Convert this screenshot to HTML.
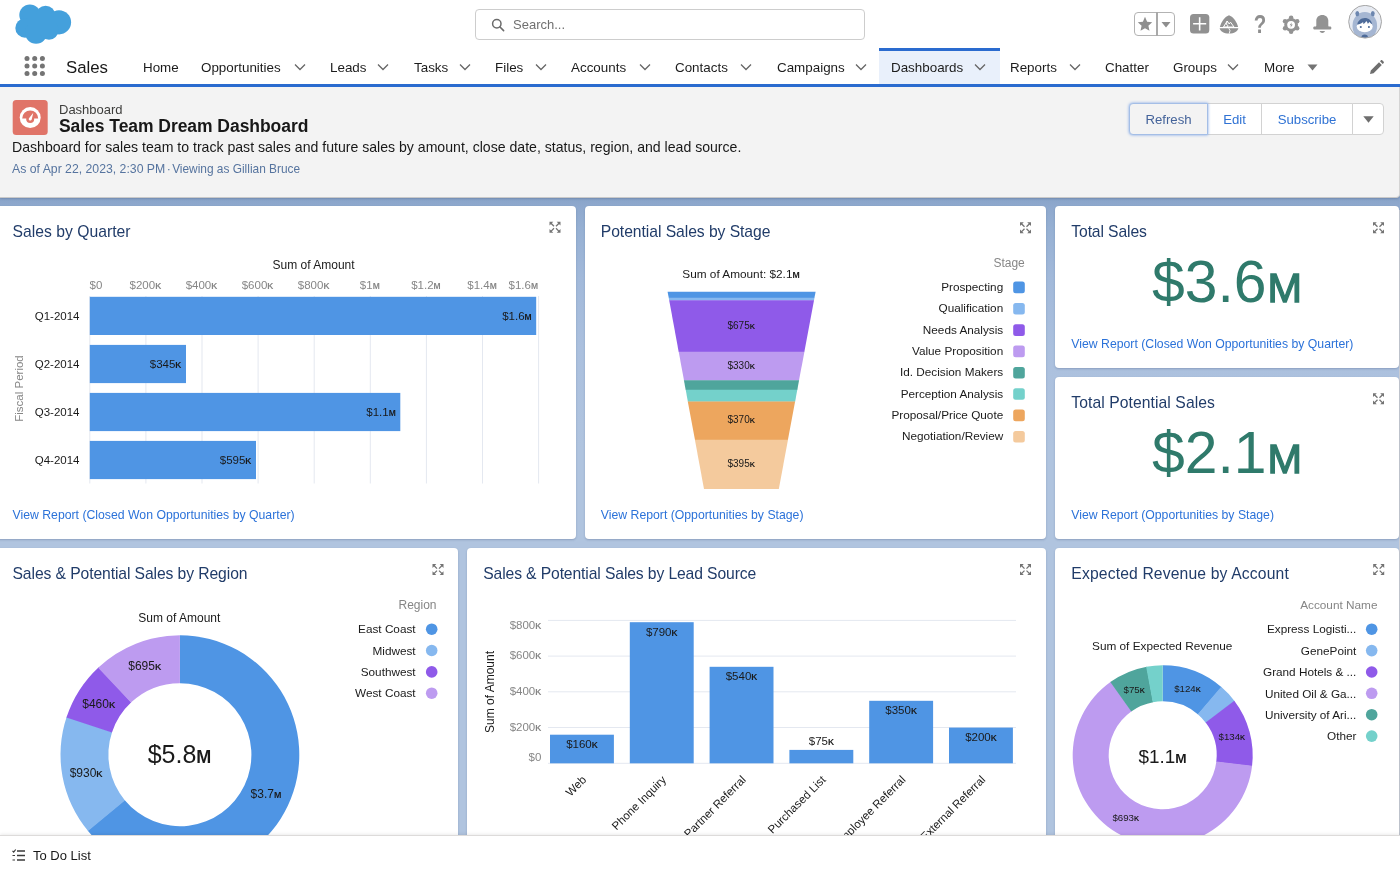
<!DOCTYPE html>
<html lang="en">
<head>
<meta charset="utf-8">
<title>Sales Team Dream Dashboard</title>
<style>
*{box-sizing:border-box;margin:0;padding:0}
html,body{width:1400px;height:875px;overflow:hidden;background:#fff}
body{font-family:"Liberation Sans",sans-serif;color:#181818;position:relative}
.t{position:absolute;white-space:nowrap;line-height:1;will-change:transform}
.abs{position:absolute}
#hdr{position:absolute;left:0;top:0;width:1400px;height:85px;background:#fff}
#navline{position:absolute;left:0;top:84.400px;width:1400px;height:2.800px;background:#2a6bcf}
#search{position:absolute;left:475px;top:9px;width:390px;height:31px;border:1px solid #cdcdcd;border-radius:4px;background:#fff}
.nav{font-size:13.400px;color:#1c1c1c;top:60.600px}
#phdr{position:absolute;left:0;top:87px;width:1400px;height:111px;background:#f3f3f3;border-bottom:1px solid #c9c9c9;border-right:1px solid #d4d4d4;border-radius:0 0 4px 0;box-shadow:0 1px 2px rgba(40,60,100,.25)}
#bg{position:absolute;left:0;top:190px;width:1400px;height:685px;background:linear-gradient(#89a4c9 0,#89a4c9 8px,#8fa9ce 17px,#96b0d3 38px,#a2b9da 88px,#abc0de 158px,#b0c4df 258px,#b0c4df 100%)}
.card{position:absolute;background:#fff;border-radius:4px;box-shadow:0 1px 2px rgba(60,80,120,.3)}
.ct{font-size:16px;color:#16325c;top:24px;left:12px;font-family:"Liberation Sans",sans-serif}
.lnk{font-size:12px;color:#2a6fd6}
.ax{font-size:11px;color:#8a8a8a}
.lb{font-size:11px;color:#181818}
.lg{font-size:12px;color:#181818;text-align:right}
#foot{position:absolute;left:0;top:835px;width:1400px;height:40px;background:#fff;border-top:1px solid #dddbda;box-shadow:0 -1px 3px rgba(0,0,0,.08)}
.btn{position:absolute;top:103px;height:32px;border:1px solid #d2d2d2;background:#fff;color:#2f72d4;font-size:13.200px;text-align:center;line-height:31.500px;will-change:transform}
</style>
</head>
<body>
<div id="bg"></div>
<div id="phdr"></div>
<div id="hdr"></div>

<!-- HEADER -->
<svg class="abs" style="left:14px;top:4px" width="60" height="42" viewBox="0 0 60 42">
 <g fill="#44a0dc">
  <circle cx="15.900" cy="11.100" r="10.600"/><circle cx="31.600" cy="11.400" r="9.700"/><circle cx="45" cy="18.300" r="12.100"/>
  <circle cx="11" cy="24" r="9.700"/><circle cx="22.100" cy="28.600" r="11.100"/><circle cx="35" cy="26.300" r="9.500"/>
  <rect x="14" y="10" width="28" height="20"/>
 </g>
</svg>
<div id="search"></div>
<svg class="abs" style="left:491px;top:18px" width="14" height="14" viewBox="0 0 14 14"><circle cx="5.800" cy="5.800" r="4.200" fill="none" stroke="#6b6b6b" stroke-width="1.500"/><path d="M9 9l3.600 3.600" stroke="#6b6b6b" stroke-width="1.600" stroke-linecap="round"/></svg>
<div class="t" style="left:513px;top:18px;font-size:13px;color:#707070">Search...</div>

<!-- right icons -->
<div class="abs" style="left:1133.500px;top:12.300px;width:41px;height:23.600px;border:1.600px solid #b3b3b3;border-radius:4px"></div>
<div class="abs" style="left:1156.200px;top:12.300px;width:1.600px;height:23.600px;background:#a9a9a9"></div>
<svg class="abs" style="left:1136px;top:15px" width="18" height="18" viewBox="0 0 18 18"><path d="M9 1.800l2.100 4.900 5.100.5-3.800 3.500 1.100 5.100L9 13.200l-4.500 2.600 1.100-5.100-3.800-3.500 5.100-.5z" fill="#8e8e8e"/></svg>
<svg class="abs" style="left:1160.500px;top:22px" width="10" height="6" viewBox="0 0 10 6"><path d="M0.500 0h9L5 5.500z" fill="#8e8e8e"/></svg>
<svg class="abs" style="left:1190px;top:14.300px" width="20" height="20" viewBox="0 0 20 20"><rect x="0" y="0" width="19.300" height="19.600" rx="3.500" fill="#919191"/><path d="M9.650 3.200v13.200M3.100 9.800h13.100" stroke="#fff" stroke-width="1.600"/></svg>
<svg class="abs" style="left:1219px;top:15px" width="20" height="19" viewBox="0 0 20 19"><path d="M10 0.300c3.800 1.200 7.800 6.300 9.100 11.700H.9C2.200 6.600 6.200 1.500 10 .3z" fill="#929292"/><path d="M.6 13.300h18.800c-.5 2.900-4.300 5.300-9.400 5.300S1.100 16.200.6 13.300z" fill="#929292"/><path d="M4.500 12l3.700-6 2 3 1.300-1.800 3.500 4.800z" fill="none" stroke="#fff" stroke-width="1" stroke-linejoin="round"/><path d="M8.200 6l-.8 3.500 1.600 1-1 1.500M9.800 13.300l1.200 2.300-.8 3" fill="none" stroke="#fff" stroke-width=".9"/></svg>
<svg class="abs" style="left:1250px;top:10px;will-change:transform" width="20" height="28" viewBox="0 0 20 28"><text x="3.700" y="23" font-family="Liberation Sans, sans-serif" font-size="25" font-weight="700" fill="#8f8f8f" textLength="12.500" lengthAdjust="spacingAndGlyphs">?</text></svg>
<svg class="abs" style="left:1281px;top:14px" width="21" height="21" viewBox="0 0 21 21"><g fill="#939393"><circle cx="10.1" cy="10.8" r="6.900"/><circle cx="10.10" cy="3.80" r="2.250"/><circle cx="16.16" cy="7.30" r="2.250"/><circle cx="16.16" cy="14.30" r="2.250"/><circle cx="10.10" cy="17.80" r="2.250"/><circle cx="4.04" cy="14.30" r="2.250"/><circle cx="4.04" cy="7.30" r="2.250"/></g><circle cx="10.1" cy="10.8" r="3.900" fill="#fff"/><path d="M10.900 8.200l-2.300 3.100h1.500l-.7 2.400 2.400-3.200h-1.600z" fill="#939393"/></svg>
<svg class="abs" style="left:1312px;top:14px" width="22" height="21" viewBox="0 0 22 21"><path d="M10.300 0.900c-3.500 0-6 2.400-6 5.700v4.900c0 .9-.4 1.100-1.700 1.100-.9 0-1.400.6-1.400 1.500 0 .9.500 1.500 1.400 1.500h15.400c.9 0 1.400-.6 1.400-1.500 0-.9-.5-1.500-1.400-1.500-1.300 0-1.700-.2-1.700-1.100V6.600c0-3.300-2.500-5.700-6-5.700z" fill="#939393"/><path d="M7.700 17.100h5.200c0 1.100-1.100 1.900-2.600 1.900s-2.600-.8-2.600-1.900z" fill="#939393"/></svg>
<!-- avatar -->
<svg class="abs" style="left:1348px;top:5px" width="35" height="35" viewBox="0 0 35 35">
 <circle cx="17.100" cy="16.700" r="16.400" fill="#e6eaf2"/>
 <clipPath id="avc"><circle cx="17.100" cy="16.700" r="16"/></clipPath>
 <g clip-path="url(#avc)">
  <ellipse cx="16.800" cy="21" rx="12.300" ry="14" fill="#a5b6d2"/>
  <path d="M3 34c1-5 5-8 8-8h11c3 0 7 3 8 8z" fill="#a5b6d2"/>
  <ellipse cx="9.300" cy="8.600" rx="1.900" ry="2.700" fill="#6c86af"/><ellipse cx="24.800" cy="8.600" rx="1.900" ry="2.700" fill="#6c86af"/>
  <ellipse cx="16.700" cy="21.500" rx="8" ry="5.700" fill="#fff"/>
  <path d="M9.200 19.800c.5-4 3.800-6.800 7.600-6.800s7 2.700 7.500 6.600c-1.200-1-2.300-1.500-3-2.800-.3 1-.8 1.500-1.500 2-.3-1.200-.8-2-1.600-2.800-.6 1.400-1.600 2.400-2.800 3-.2-.8-.3-1.300-.2-2-1.700 1.500-3.600 2.300-6 2.800z" fill="#4e6b99"/>
  <circle cx="12.800" cy="22" r="1.050" fill="#4e6b99"/><circle cx="20.900" cy="22" r="1.050" fill="#4e6b99"/>
  <ellipse cx="16.700" cy="32" rx="3.200" ry="2.600" fill="#4e6b99"/>
 </g>
 <circle cx="17.100" cy="16.700" r="16.400" fill="none" stroke="#a6a6a6" stroke-width="1"/>
</svg>

<!-- NAV -->
<svg class="abs" style="left:24px;top:55px" width="22" height="22" viewBox="0 0 22 22"><g fill="#747474">
<circle cx="3" cy="3.500" r="2.500"/><circle cx="10.700" cy="3.500" r="2.500"/><circle cx="18.400" cy="3.500" r="2.500"/>
<circle cx="3" cy="11" r="2.500"/><circle cx="10.700" cy="11" r="2.500"/><circle cx="18.400" cy="11" r="2.500"/>
<circle cx="3" cy="18.500" r="2.500"/><circle cx="10.700" cy="18.500" r="2.500"/><circle cx="18.400" cy="18.500" r="2.500"/></g></svg>
<div class="t" style="left:66px;top:60px;font-size:16.800px;color:#181818">Sales</div>
<div class="abs" style="left:879px;top:48px;width:121px;height:37px;background:#e9f0fb;border-top:3px solid #2a6bcf"></div>
<div class="t nav" style="left:143px">Home</div>
<div class="t nav" style="left:201px">Opportunities</div>
<svg class="abs" style="left:294px;top:63px" width="12" height="8" viewBox="0 0 12 8"><path d="M1 1.500l5 5 5-5" fill="none" stroke="#666" stroke-width="1.300"/></svg>
<div class="t nav" style="left:330px">Leads</div>
<svg class="abs" style="left:377px;top:63px" width="12" height="8" viewBox="0 0 12 8"><path d="M1 1.500l5 5 5-5" fill="none" stroke="#666" stroke-width="1.300"/></svg>
<div class="t nav" style="left:414px">Tasks</div>
<svg class="abs" style="left:459px;top:63px" width="12" height="8" viewBox="0 0 12 8"><path d="M1 1.500l5 5 5-5" fill="none" stroke="#666" stroke-width="1.300"/></svg>
<div class="t nav" style="left:495px">Files</div>
<svg class="abs" style="left:535px;top:63px" width="12" height="8" viewBox="0 0 12 8"><path d="M1 1.500l5 5 5-5" fill="none" stroke="#666" stroke-width="1.300"/></svg>
<div class="t nav" style="left:571px">Accounts</div>
<svg class="abs" style="left:639px;top:63px" width="12" height="8" viewBox="0 0 12 8"><path d="M1 1.500l5 5 5-5" fill="none" stroke="#666" stroke-width="1.300"/></svg>
<div class="t nav" style="left:675px">Contacts</div>
<svg class="abs" style="left:740px;top:63px" width="12" height="8" viewBox="0 0 12 8"><path d="M1 1.500l5 5 5-5" fill="none" stroke="#666" stroke-width="1.300"/></svg>
<div class="t nav" style="left:777px">Campaigns</div>
<svg class="abs" style="left:855px;top:63px" width="12" height="8" viewBox="0 0 12 8"><path d="M1 1.500l5 5 5-5" fill="none" stroke="#666" stroke-width="1.300"/></svg>
<div class="t nav" style="left:891px">Dashboards</div>
<svg class="abs" style="left:974px;top:63px" width="12" height="8" viewBox="0 0 12 8"><path d="M1 1.500l5 5 5-5" fill="none" stroke="#666" stroke-width="1.300"/></svg>
<div class="t nav" style="left:1010px">Reports</div>
<svg class="abs" style="left:1069px;top:63px" width="12" height="8" viewBox="0 0 12 8"><path d="M1 1.500l5 5 5-5" fill="none" stroke="#666" stroke-width="1.300"/></svg>
<div class="t nav" style="left:1105px">Chatter</div>
<div class="t nav" style="left:1173px">Groups</div>
<svg class="abs" style="left:1227px;top:63px" width="12" height="8" viewBox="0 0 12 8"><path d="M1 1.500l5 5 5-5" fill="none" stroke="#666" stroke-width="1.300"/></svg>
<div class="t nav" style="left:1264px">More</div>
<svg class="abs" style="left:1307px;top:64px" width="11" height="7" viewBox="0 0 11 7"><path d="M0.500 0.500h10L5.500 6.500z" fill="#747474"/></svg>
<svg class="abs" style="left:1369px;top:60px" width="15" height="15" viewBox="0 0 15 15"><path d="M1 14l.8-3.600 8.200-8.200 2.800 2.800-8.200 8.200zM11 1.200l1-1c.4-.3.900-.3 1.200 0l1.500 1.600c.3.300.3.800 0 1.100l-1 1z" fill="#6e6e6e"/></svg>
<div id="navline"></div>

<!-- PAGE HEADER -->
<svg class="abs" style="left:12px;top:99px" width="37" height="37" viewBox="0 0 37 37"><rect x="0.700" y="1" width="35" height="35" rx="3.500" fill="#e07468"/><circle cx="18.200" cy="18.600" r="10.500" fill="#fff"/><path d="M10.200 19.400a8 8 0 0 1 16 0z" fill="#e07468"/><circle cx="18.200" cy="20" r="4" fill="#e07468"/><path d="M21.300 13.800l-1.500 6.300a1.550 1.550 0 1 1-2.600-1.200z" fill="#fff"/></svg>
<div class="t" style="left:59px;top:103px;font-size:13px;color:#3e3e3c">Dashboard</div>
<div class="t" style="left:59px;top:118px;font-size:17.500px;font-weight:700;color:#181818;letter-spacing:-.05px">Sales Team Dream Dashboard</div>
<div class="t" style="left:12px;top:140px;font-size:14.100px;color:#181818">Dashboard for sales team to track past sales and future sales by amount, close date, status, region, and lead source.</div>
<div class="t" style="left:12px;top:163px;font-size:12.250px;color:#56749f">As of Apr 22, 2023, 2:30 PM<span style="margin:0 -2px 0 -2px"> · </span><span style="font-size:11.900px">Viewing as Gillian Bruce</span></div>
<div class="btn" style="left:1129px;width:79px;border-radius:4px 0 0 4px;background:#f3f3f3;color:#44639a;border-color:#a4bee6;box-shadow:0 0 3px #7aa3e6;z-index:2">Refresh</div>
<div class="btn" style="left:1207px;width:55px">Edit</div>
<div class="btn" style="left:1261px;width:92px">Subscribe</div>
<div class="btn" style="left:1352px;width:32px;border-radius:0 4px 4px 0"></div>
<svg class="abs" style="left:1362.500px;top:116px;z-index:3" width="11" height="7" viewBox="0 0 11 7"><path d="M0.300 0.300h10.400L5.500 6.800z" fill="#6e6e6e"/></svg>
<div class="abs" style="left:1399px;top:210px;width:1px;height:625px;background:#c9ccd3"></div>

<!-- cards -->
<div class="card" id="c1" style="left:-4px;top:206px;width:580px;height:333px"></div>
<div class="card" id="c2" style="left:585px;top:206px;width:461px;height:333px"></div>
<div class="card" id="c3" style="left:1055px;top:206px;width:344px;height:162px"></div>
<div class="card" id="c4" style="left:1055px;top:377px;width:344px;height:162px"></div>
<div class="card" id="c5" style="left:-4px;top:548px;width:462px;height:333px"></div>
<div class="card" id="c6" style="left:467px;top:548px;width:579px;height:333px"></div>
<div class="card" id="c7" style="left:1055px;top:548px;width:344px;height:333px"></div>

<!--CHARTS-->
<svg class="abs" style="left:0;top:0;will-change:transform" width="1400" height="875" viewBox="0 0 1400 875" font-family="Liberation Sans, sans-serif">
<text x="12.5" y="237.0" font-size="15.7" fill="#213c69" text-anchor="start" textLength="118.1" lengthAdjust="spacing">Sales by Quarter</text>
<g transform="translate(549.5,221.8)" fill="#747474" stroke="#747474" stroke-width="1.3"><path d="M0 0h3.800L0 3.800z M11 0v3.800L7.200 0z M0 11v-3.800l3.800 3.800z M11 11h-3.800l3.800-3.800z" stroke="none"/><path d="M1.2 1.2l3.3 3.3M9.800 1.200l-3.300 3.300M1.200 9.800l3.300-3.300M9.800 9.800l-3.300-3.300"/></g>
<text x="313.6" y="268.8" font-size="12" fill="#1a1a1a" text-anchor="middle" >Sum of Amount</text>
<rect x="89.3" y="296" width="1" height="187.500" fill="#e4e8f0"/>
<rect x="145.4" y="296" width="1" height="187.500" fill="#e4e8f0"/>
<rect x="201.5" y="296" width="1" height="187.500" fill="#e4e8f0"/>
<rect x="257.6" y="296" width="1" height="187.500" fill="#e4e8f0"/>
<rect x="313.7" y="296" width="1" height="187.500" fill="#e4e8f0"/>
<rect x="369.8" y="296" width="1" height="187.500" fill="#e4e8f0"/>
<rect x="425.9" y="296" width="1" height="187.500" fill="#e4e8f0"/>
<rect x="482.0" y="296" width="1" height="187.500" fill="#e4e8f0"/>
<rect x="538.1" y="296" width="1" height="187.500" fill="#e4e8f0"/>
<text x="89.5" y="289.2" font-size="11.5" fill="#868686" text-anchor="start" >$0</text>
<text x="145.4" y="289.2" font-size="11.5" fill="#868686" text-anchor="middle" >$200<tspan font-size="0.74em" font-weight="700">K</tspan></text>
<text x="201.5" y="289.2" font-size="11.5" fill="#868686" text-anchor="middle" >$400<tspan font-size="0.74em" font-weight="700">K</tspan></text>
<text x="257.6" y="289.2" font-size="11.5" fill="#868686" text-anchor="middle" >$600<tspan font-size="0.74em" font-weight="700">K</tspan></text>
<text x="313.7" y="289.2" font-size="11.5" fill="#868686" text-anchor="middle" >$800<tspan font-size="0.74em" font-weight="700">K</tspan></text>
<text x="369.8" y="289.2" font-size="11.5" fill="#868686" text-anchor="middle" >$1<tspan font-size="0.74em" font-weight="700">M</tspan></text>
<text x="425.9" y="289.2" font-size="11.5" fill="#868686" text-anchor="middle" >$1.2<tspan font-size="0.74em" font-weight="700">M</tspan></text>
<text x="482.0" y="289.2" font-size="11.5" fill="#868686" text-anchor="middle" >$1.4<tspan font-size="0.74em" font-weight="700">M</tspan></text>
<text x="538.0" y="289.2" font-size="11.5" fill="#868686" text-anchor="end" >$1.6<tspan font-size="0.74em" font-weight="700">M</tspan></text>
<rect x="89.8" y="296.8" width="446.4" height="38.200" fill="#4f95e4"/>
<text x="79.5" y="320.1" font-size="11.5" fill="#1a1a1a" text-anchor="end" >Q1-2014</text>
<text x="531.7" y="320.1" font-size="11.5" fill="#1a1a1a" text-anchor="end" >$1.6<tspan font-size="0.74em" font-weight="700">M</tspan></text>
<rect x="89.8" y="344.9" width="96.2" height="38.200" fill="#4f95e4"/>
<text x="79.5" y="368.2" font-size="11.5" fill="#1a1a1a" text-anchor="end" >Q2-2014</text>
<text x="181.5" y="368.2" font-size="11.5" fill="#1a1a1a" text-anchor="end" >$345<tspan font-size="0.74em" font-weight="700">K</tspan></text>
<rect x="89.8" y="392.9" width="310.5" height="38.200" fill="#4f95e4"/>
<text x="79.5" y="416.2" font-size="11.5" fill="#1a1a1a" text-anchor="end" >Q3-2014</text>
<text x="395.8" y="416.2" font-size="11.5" fill="#1a1a1a" text-anchor="end" >$1.1<tspan font-size="0.74em" font-weight="700">M</tspan></text>
<rect x="89.8" y="440.9" width="166.2" height="38.200" fill="#4f95e4"/>
<text x="79.5" y="464.2" font-size="11.5" fill="#1a1a1a" text-anchor="end" >Q4-2014</text>
<text x="251.5" y="464.2" font-size="11.5" fill="#1a1a1a" text-anchor="end" >$595<tspan font-size="0.74em" font-weight="700">K</tspan></text>
<text transform="translate(22.800,388.500) rotate(-90)" font-size="11.500" fill="#868686" text-anchor="middle">Fiscal Period</text>
<text x="12.5" y="518.7" font-size="12.25" fill="#2b72d9" text-anchor="start" >View Report (Closed Won Opportunities by Quarter)</text>
<text x="600.8" y="237.0" font-size="15.7" fill="#213c69" text-anchor="start" textLength="169.6" lengthAdjust="spacing">Potential Sales by Stage</text>
<g transform="translate(1020.0,222.3)" fill="#747474" stroke="#747474" stroke-width="1.3"><path d="M0 0h3.800L0 3.800z M11 0v3.800L7.200 0z M0 11v-3.800l3.800 3.800z M11 11h-3.800l3.800-3.800z" stroke="none"/><path d="M1.2 1.2l3.3 3.3M9.800 1.200l-3.300 3.300M1.200 9.800l3.300-3.300M9.800 9.800l-3.300-3.300"/></g>
<text x="741.0" y="278.2" font-size="11.8" fill="#1a1a1a" text-anchor="middle" >Sum of Amount: $2.1<tspan font-size="0.74em" font-weight="700">M</tspan></text>
<path d="M667.6 291.8H815.6L814.4 298.1H668.8z" fill="#4f95e4"/>
<path d="M668.7 297.8H814.5L814.0 300.5H669.2z" fill="#86b8ef"/>
<path d="M669.2 300.2H814.0L804.3 352.1H678.7z" fill="#8f5ae9"/>
<path d="M678.7 351.8H804.4L799.0 380.5H684.0z" fill="#bd9bf0"/>
<path d="M683.9 380.2H799.1L797.3 390.1H685.7z" fill="#4fa59c"/>
<path d="M685.7 389.8H797.3L795.1 401.7H687.9z" fill="#74d1cb"/>
<path d="M687.8 401.4H795.1L787.9 440.1H695.0z" fill="#eda65e"/>
<path d="M694.9 439.8H788.0L778.8 489.0H704.0z" fill="#f4ca9d"/>
<text x="741.3" y="329.0" font-size="10" fill="#1a1a1a" text-anchor="middle" >$675<tspan font-size="0.74em" font-weight="700">K</tspan></text>
<text x="741.3" y="369.0" font-size="10" fill="#1a1a1a" text-anchor="middle" >$330<tspan font-size="0.74em" font-weight="700">K</tspan></text>
<text x="741.3" y="423.3" font-size="10" fill="#1a1a1a" text-anchor="middle" >$370<tspan font-size="0.74em" font-weight="700">K</tspan></text>
<text x="741.3" y="467.0" font-size="10" fill="#1a1a1a" text-anchor="middle" >$395<tspan font-size="0.74em" font-weight="700">K</tspan></text>
<text x="1024.8" y="267.0" font-size="12" fill="#868686" text-anchor="end" >Stage</text>
<text x="1003.2" y="291.0" font-size="11.75" fill="#1a1a1a" text-anchor="end" >Prospecting</text>
<rect x="1013.200" y="281.6" width="11.600" height="11.600" rx="2.500" fill="#4f95e4"/>
<text x="1003.2" y="312.3" font-size="11.75" fill="#1a1a1a" text-anchor="end" >Qualification</text>
<rect x="1013.200" y="302.9" width="11.600" height="11.600" rx="2.500" fill="#86b8ef"/>
<text x="1003.2" y="333.7" font-size="11.75" fill="#1a1a1a" text-anchor="end" >Needs Analysis</text>
<rect x="1013.200" y="324.3" width="11.600" height="11.600" rx="2.500" fill="#8f5ae9"/>
<text x="1003.2" y="355.0" font-size="11.75" fill="#1a1a1a" text-anchor="end" >Value Proposition</text>
<rect x="1013.200" y="345.6" width="11.600" height="11.600" rx="2.500" fill="#bd9bf0"/>
<text x="1003.2" y="376.3" font-size="11.75" fill="#1a1a1a" text-anchor="end" >Id. Decision Makers</text>
<rect x="1013.200" y="366.9" width="11.600" height="11.600" rx="2.500" fill="#4fa59c"/>
<text x="1003.2" y="397.6" font-size="11.75" fill="#1a1a1a" text-anchor="end" >Perception Analysis</text>
<rect x="1013.200" y="388.2" width="11.600" height="11.600" rx="2.500" fill="#74d1cb"/>
<text x="1003.2" y="419.0" font-size="11.75" fill="#1a1a1a" text-anchor="end" >Proposal/Price Quote</text>
<rect x="1013.200" y="409.6" width="11.600" height="11.600" rx="2.500" fill="#eda65e"/>
<text x="1003.2" y="440.3" font-size="11.75" fill="#1a1a1a" text-anchor="end" >Negotiation/Review</text>
<rect x="1013.200" y="430.9" width="11.600" height="11.600" rx="2.500" fill="#f4ca9d"/>
<text x="600.8" y="518.7" font-size="12.25" fill="#2b72d9" text-anchor="start" >View Report (Opportunities by Stage)</text>
<text x="1071.3" y="237.0" font-size="15.7" fill="#213c69" text-anchor="start" textLength="75.6" lengthAdjust="spacing">Total Sales</text>
<g transform="translate(1373.0,222.3)" fill="#747474" stroke="#747474" stroke-width="1.3"><path d="M0 0h3.800L0 3.800z M11 0v3.800L7.200 0z M0 11v-3.800l3.800 3.800z M11 11h-3.800l3.800-3.800z" stroke="none"/><path d="M1.2 1.2l3.3 3.3M9.800 1.200l-3.300 3.300M1.200 9.800l3.300-3.300M9.800 9.800l-3.300-3.300"/></g>
<text x="1152" y="302.0" font-size="59" fill="#2f7a6b" textLength="114.500" lengthAdjust="spacingAndGlyphs">$3.6</text>
<text x="1267.500" y="302.0" font-size="40" stroke="#2f7a6b" stroke-width="1.300" fill="#2f7a6b" textLength="34.500" lengthAdjust="spacingAndGlyphs">M</text>
<text x="1071.3" y="347.7" font-size="12.25" fill="#2b72d9" text-anchor="start" >View Report (Closed Won Opportunities by Quarter)</text>
<text x="1071.3" y="408.0" font-size="15.7" fill="#213c69" text-anchor="start" textLength="143.6" lengthAdjust="spacing">Total Potential Sales</text>
<g transform="translate(1373.0,393.3)" fill="#747474" stroke="#747474" stroke-width="1.3"><path d="M0 0h3.800L0 3.800z M11 0v3.800L7.200 0z M0 11v-3.800l3.800 3.800z M11 11h-3.800l3.800-3.800z" stroke="none"/><path d="M1.2 1.2l3.3 3.3M9.800 1.200l-3.300 3.300M1.200 9.800l3.300-3.300M9.800 9.800l-3.300-3.300"/></g>
<text x="1152" y="473.0" font-size="59" fill="#2f7a6b" textLength="114.500" lengthAdjust="spacingAndGlyphs">$2.1</text>
<text x="1267.500" y="473.0" font-size="40" stroke="#2f7a6b" stroke-width="1.300" fill="#2f7a6b" textLength="34.500" lengthAdjust="spacingAndGlyphs">M</text>
<text x="1071.3" y="518.7" font-size="12.25" fill="#2b72d9" text-anchor="start" >View Report (Opportunities by Stage)</text>
<text x="12.5" y="579.0" font-size="15.7" fill="#213c69" text-anchor="start" textLength="235" lengthAdjust="spacing">Sales &amp; Potential Sales by Region</text>
<g transform="translate(432.5,564.1)" fill="#747474" stroke="#747474" stroke-width="1.3"><path d="M0 0h3.800L0 3.800z M11 0v3.800L7.200 0z M0 11v-3.800l3.800 3.800z M11 11h-3.800l3.800-3.800z" stroke="none"/><path d="M1.2 1.2l3.3 3.3M9.800 1.200l-3.300 3.300M1.200 9.800l3.300-3.300M9.800 9.800l-3.300-3.300"/></g>
<text x="179.3" y="621.9" font-size="12" fill="#1a1a1a" text-anchor="middle" >Sum of Amount</text>
<path d="M179.90 635.30A119.4 119.4 0 1 1 87.57 830.41L124.61 800.03A71.5 71.5 0 1 0 179.90 683.20z" fill="#4f95e4"/>
<path d="M88.10 831.05A119.4 119.4 0 0 1 66.69 716.77L112.10 731.98A71.5 71.5 0 0 0 124.93 800.42z" fill="#86b8ef"/>
<path d="M66.42 717.56A119.4 119.4 0 0 1 98.70 667.16L131.27 702.28A71.5 71.5 0 0 0 111.95 732.46z" fill="#8f5ae9"/>
<path d="M98.09 667.73A119.4 119.4 0 0 1 179.90 635.30L179.90 683.20A71.5 71.5 0 0 0 130.91 702.62z" fill="#bd9bf0"/>
<text x="179.500" y="762.800" font-size="25" fill="#1a1a1a" text-anchor="middle">$5.8<tspan font-size="0.72em" font-weight="700">M</tspan></text>
<text x="266.0" y="798.0" font-size="12" fill="#1a1a1a" text-anchor="middle" >$3.7<tspan font-size="0.74em" font-weight="700">M</tspan></text>
<text x="86.2" y="776.6" font-size="12" fill="#1a1a1a" text-anchor="middle" >$930<tspan font-size="0.74em" font-weight="700">K</tspan></text>
<text x="98.8" y="708.0" font-size="12" fill="#1a1a1a" text-anchor="middle" >$460<tspan font-size="0.74em" font-weight="700">K</tspan></text>
<text x="144.8" y="669.8" font-size="12" fill="#1a1a1a" text-anchor="middle" >$695<tspan font-size="0.74em" font-weight="700">K</tspan></text>
<text x="436.5" y="609.2" font-size="12" fill="#868686" text-anchor="end" >Region</text>
<text x="415.6" y="633.4" font-size="11.75" fill="#1a1a1a" text-anchor="end" >East Coast</text>
<circle cx="431.700" cy="629.2" r="5.800" fill="#4f95e4"/>
<text x="415.6" y="654.7" font-size="11.75" fill="#1a1a1a" text-anchor="end" >Midwest</text>
<circle cx="431.700" cy="650.5" r="5.800" fill="#86b8ef"/>
<text x="415.6" y="676.1" font-size="11.75" fill="#1a1a1a" text-anchor="end" >Southwest</text>
<circle cx="431.700" cy="671.9" r="5.800" fill="#8f5ae9"/>
<text x="415.6" y="697.4" font-size="11.75" fill="#1a1a1a" text-anchor="end" >West Coast</text>
<circle cx="431.700" cy="693.2" r="5.800" fill="#bd9bf0"/>
<text x="483.2" y="579.0" font-size="15.7" fill="#213c69" text-anchor="start" textLength="273" lengthAdjust="spacing">Sales &amp; Potential Sales by Lead Source</text>
<g transform="translate(1020.0,564.1)" fill="#747474" stroke="#747474" stroke-width="1.3"><path d="M0 0h3.800L0 3.800z M11 0v3.800L7.200 0z M0 11v-3.800l3.800 3.800z M11 11h-3.800l3.800-3.800z" stroke="none"/><path d="M1.2 1.2l3.3 3.3M9.800 1.200l-3.300 3.300M1.200 9.800l3.300-3.300M9.800 9.800l-3.300-3.300"/></g>
<rect x="548" y="619.9" width="468" height="1" fill="#e4e8f0"/>
<rect x="548" y="655.6" width="468" height="1" fill="#e4e8f0"/>
<rect x="548" y="691.3" width="468" height="1" fill="#e4e8f0"/>
<rect x="548" y="727.0" width="468" height="1" fill="#e4e8f0"/>
<rect x="548" y="762.8" width="468" height="1" fill="#e4e8f0"/>
<text x="541.4" y="628.9" font-size="11.5" fill="#868686" text-anchor="end" >$800<tspan font-size="0.74em" font-weight="700">K</tspan></text>
<text x="541.4" y="659.4" font-size="11.5" fill="#868686" text-anchor="end" >$600<tspan font-size="0.74em" font-weight="700">K</tspan></text>
<text x="541.4" y="695.3" font-size="11.5" fill="#868686" text-anchor="end" >$400<tspan font-size="0.74em" font-weight="700">K</tspan></text>
<text x="541.4" y="731.2" font-size="11.5" fill="#868686" text-anchor="end" >$200<tspan font-size="0.74em" font-weight="700">K</tspan></text>
<text x="541.4" y="760.5" font-size="11.5" fill="#868686" text-anchor="end" >$0</text>
<text transform="translate(494.400,692) rotate(-90)" font-size="12" fill="#1a1a1a" text-anchor="middle">Sum of Amount</text>
<rect x="550.0" y="734.7" width="63.900" height="28.6" fill="#4f95e4"/>
<text x="582.0" y="748.3" font-size="11.5" fill="#1a1a1a" text-anchor="middle" >$160<tspan font-size="0.74em" font-weight="700">K</tspan></text>
<text transform="translate(587.0,780.5) rotate(-45)" font-size="11.500" fill="#1a1a1a" text-anchor="end">Web</text>
<rect x="629.8" y="622.2" width="63.900" height="141.1" fill="#4f95e4"/>
<text x="661.8" y="635.8" font-size="11.5" fill="#1a1a1a" text-anchor="middle" >$790<tspan font-size="0.74em" font-weight="700">K</tspan></text>
<text transform="translate(666.8,780.5) rotate(-45)" font-size="11.500" fill="#1a1a1a" text-anchor="end">Phone Inquiry</text>
<rect x="709.6" y="666.8" width="63.900" height="96.5" fill="#4f95e4"/>
<text x="741.6" y="680.4" font-size="11.5" fill="#1a1a1a" text-anchor="middle" >$540<tspan font-size="0.74em" font-weight="700">K</tspan></text>
<text transform="translate(746.6,780.5) rotate(-45)" font-size="11.500" fill="#1a1a1a" text-anchor="end">Partner Referral</text>
<rect x="789.4" y="749.9" width="63.900" height="13.4" fill="#4f95e4"/>
<text x="821.4" y="744.9" font-size="11.5" fill="#1a1a1a" text-anchor="middle" >$75<tspan font-size="0.74em" font-weight="700">K</tspan></text>
<text transform="translate(826.4,780.5) rotate(-45)" font-size="11.500" fill="#1a1a1a" text-anchor="end">Purchased List</text>
<rect x="869.2" y="700.8" width="63.900" height="62.5" fill="#4f95e4"/>
<text x="901.2" y="714.4" font-size="11.5" fill="#1a1a1a" text-anchor="middle" >$350<tspan font-size="0.74em" font-weight="700">K</tspan></text>
<text transform="translate(906.2,780.5) rotate(-45)" font-size="11.500" fill="#1a1a1a" text-anchor="end">Employee Referral</text>
<rect x="949.0" y="727.6" width="63.900" height="35.7" fill="#4f95e4"/>
<text x="981.0" y="741.2" font-size="11.5" fill="#1a1a1a" text-anchor="middle" >$200<tspan font-size="0.74em" font-weight="700">K</tspan></text>
<text transform="translate(986.0,780.5) rotate(-45)" font-size="11.500" fill="#1a1a1a" text-anchor="end">External Referral</text>
<text x="1071.3" y="579.0" font-size="15.7" fill="#213c69" text-anchor="start" textLength="217.5" lengthAdjust="spacing">Expected Revenue by Account</text>
<g transform="translate(1373.2,564.1)" fill="#747474" stroke="#747474" stroke-width="1.3"><path d="M0 0h3.800L0 3.800z M11 0v3.800L7.200 0z M0 11v-3.800l3.800 3.800z M11 11h-3.800l3.800-3.800z" stroke="none"/><path d="M1.2 1.2l3.3 3.3M9.800 1.200l-3.300 3.300M1.200 9.800l3.300-3.300M9.800 9.800l-3.300-3.300"/></g>
<text x="1377.5" y="609.2" font-size="11.8" fill="#868686" text-anchor="end" >Account Name</text>
<text x="1356.4" y="633.4" font-size="11.75" fill="#1a1a1a" text-anchor="end" >Express Logisti...</text>
<circle cx="1371.700" cy="629.2" r="5.800" fill="#4f95e4"/>
<text x="1356.4" y="654.8" font-size="11.75" fill="#1a1a1a" text-anchor="end" >GenePoint</text>
<circle cx="1371.700" cy="650.6" r="5.800" fill="#86b8ef"/>
<text x="1356.4" y="676.2" font-size="11.75" fill="#1a1a1a" text-anchor="end" >Grand Hotels &amp; ...</text>
<circle cx="1371.700" cy="672.0" r="5.800" fill="#8f5ae9"/>
<text x="1356.4" y="697.5" font-size="11.75" fill="#1a1a1a" text-anchor="end" >United Oil &amp; Ga...</text>
<circle cx="1371.700" cy="693.3" r="5.800" fill="#bd9bf0"/>
<text x="1356.4" y="718.9" font-size="11.75" fill="#1a1a1a" text-anchor="end" >University of Ari...</text>
<circle cx="1371.700" cy="714.7" r="5.800" fill="#4fa59c"/>
<text x="1356.4" y="740.3" font-size="11.75" fill="#1a1a1a" text-anchor="end" >Other</text>
<circle cx="1371.700" cy="736.1" r="5.800" fill="#74d1cb"/>
<text x="1162.2" y="650.4" font-size="11.8" fill="#1a1a1a" text-anchor="middle" >Sum of Expected Revenue</text>
<path d="M1162.70 665.30A90 90 0 0 1 1221.63 687.27L1198.06 714.48A54 54 0 0 0 1162.70 701.30z" fill="#4f95e4"/>
<path d="M1221.15 686.86A90 90 0 0 1 1234.67 701.26L1205.88 722.88A54 54 0 0 0 1197.77 714.24z" fill="#86b8ef"/>
<path d="M1234.29 700.76A90 90 0 0 1 1252.03 766.27L1216.30 761.88A54 54 0 0 0 1205.66 722.58z" fill="#8f5ae9"/>
<path d="M1252.10 765.64A90 90 0 1 1 1110.82 681.76L1131.57 711.17A54 54 0 1 0 1216.34 761.51z" fill="#bd9bf0"/>
<path d="M1110.31 682.12A90 90 0 0 1 1146.76 666.72L1153.14 702.15A54 54 0 0 0 1131.27 711.39z" fill="#4fa59c"/>
<path d="M1146.14 666.84A90 90 0 0 1 1162.70 665.30L1162.70 701.30A54 54 0 0 0 1152.77 702.22z" fill="#74d1cb"/>
<text x="1162.500" y="763" font-size="18.900" fill="#1a1a1a" text-anchor="middle">$1.1<tspan font-size="0.72em" font-weight="700">M</tspan></text>
<text x="1187.5" y="691.7" font-size="9.7" fill="#1a1a1a" text-anchor="middle" >$124<tspan font-size="0.74em" font-weight="700">K</tspan></text>
<text x="1231.9" y="740.0" font-size="9.7" fill="#1a1a1a" text-anchor="middle" >$134<tspan font-size="0.74em" font-weight="700">K</tspan></text>
<text x="1125.8" y="820.8" font-size="9.7" fill="#1a1a1a" text-anchor="middle" >$693<tspan font-size="0.74em" font-weight="700">K</tspan></text>
<text x="1134.2" y="692.5" font-size="9.7" fill="#1a1a1a" text-anchor="middle" >$75<tspan font-size="0.74em" font-weight="700">K</tspan></text>
</svg>
<!--/CHARTS-->
<div id="foot"></div>
<svg class="abs" style="left:12px;top:849px" width="14" height="13" viewBox="0 0 14 13"><g stroke="#3a3a3a" stroke-width="1.500" fill="none"><path d="M5 2h8M5 6.500h8M5 11h8"/><path d="M0.500 1.800l1.200 1.200 2-2.500M0.500 6.500h2.500M0.500 11h2.500" stroke-width="1.200"/></g></svg>
<div class="t" style="left:33px;top:849px;font-size:13px;color:#181818">To Do List</div>
</body>
</html>
